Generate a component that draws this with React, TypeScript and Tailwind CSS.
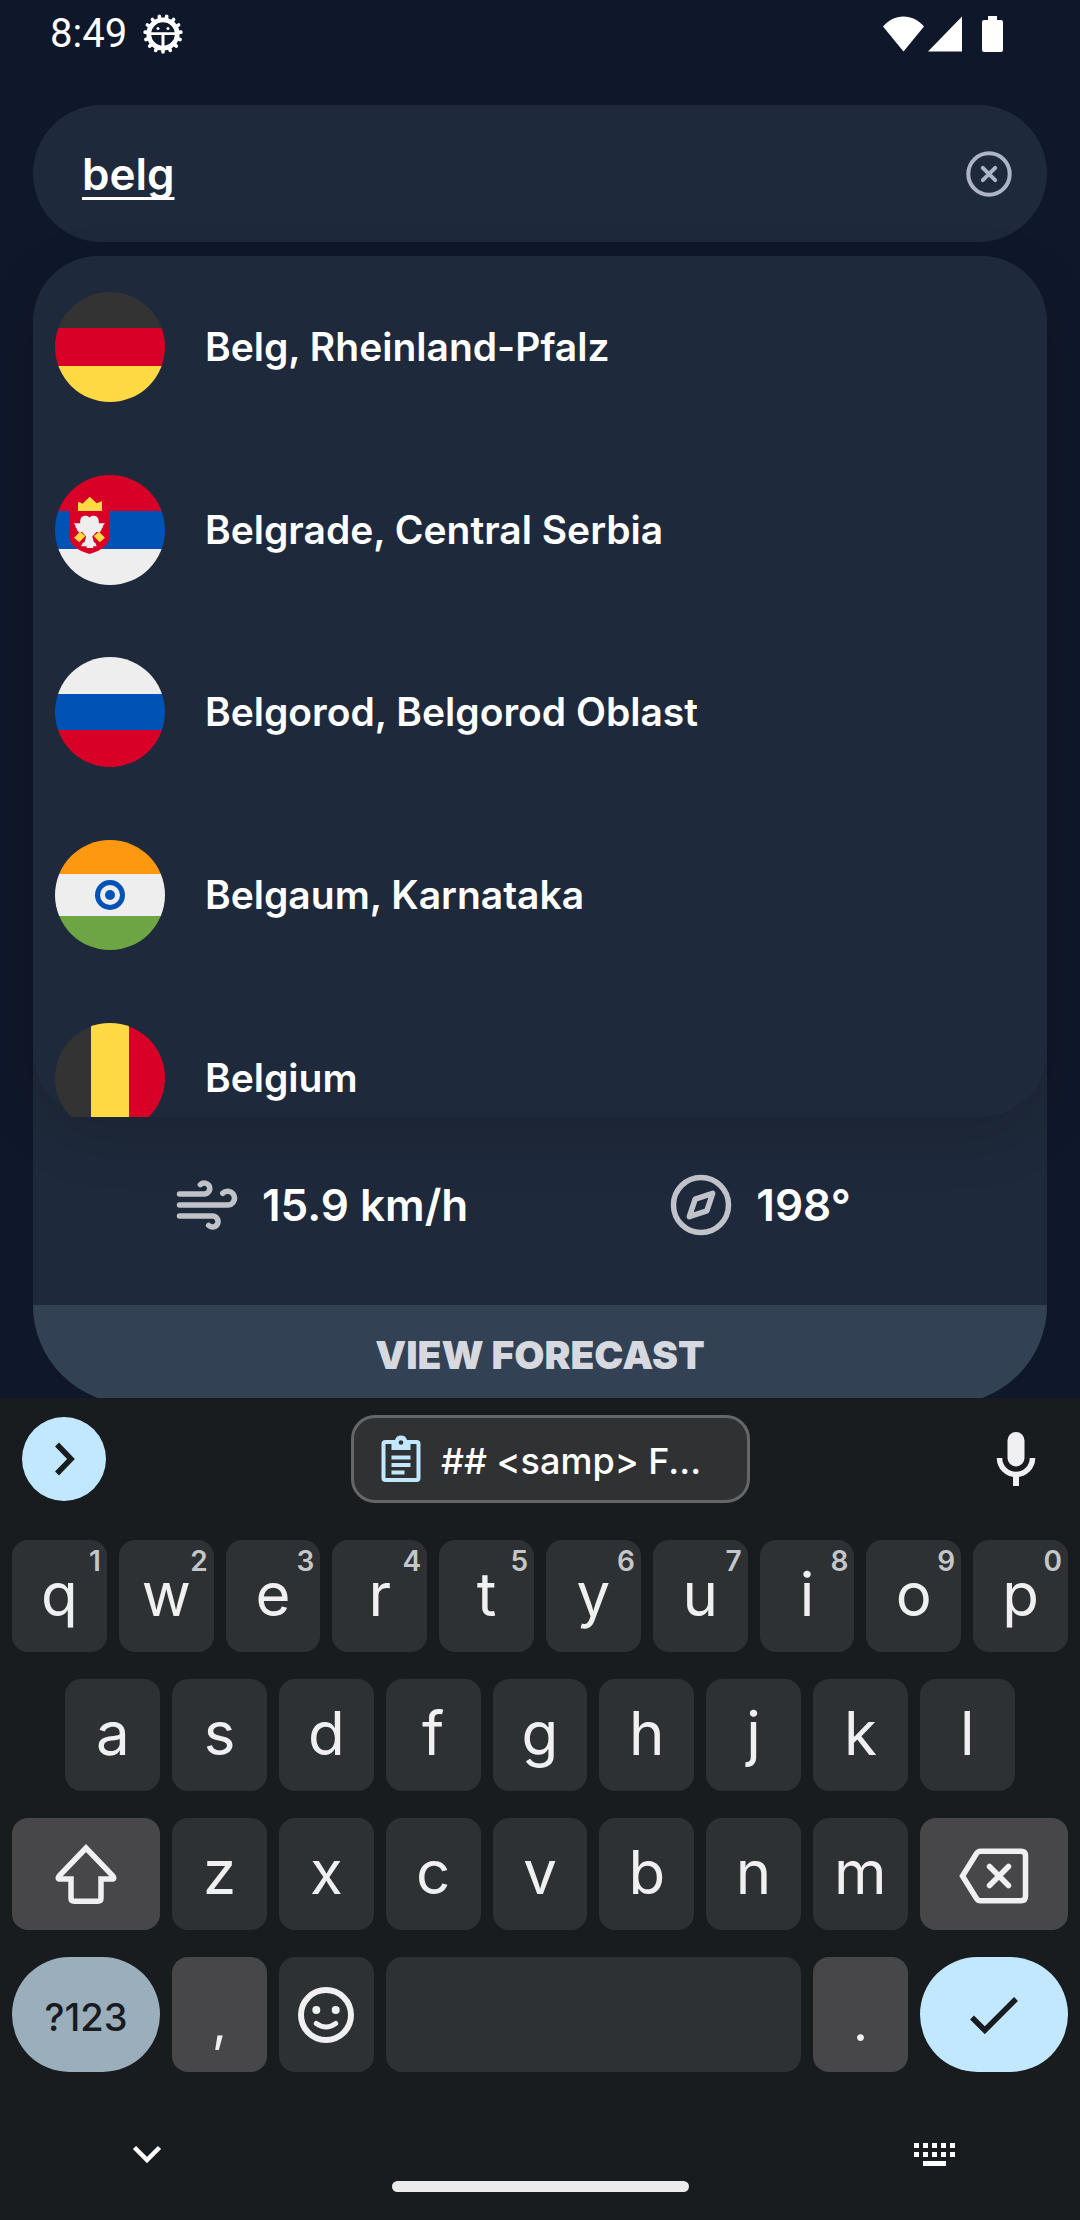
import React from "react";

type Flag = "de" | "rs" | "ru" | "in" | "be";

const results: { flag: Flag; name: string }[] = [
  { flag: "de", name: "Belg, Rheinland-Pfalz" },
  { flag: "rs", name: "Belgrade, Central Serbia" },
  { flag: "ru", name: "Belgorod, Belgorod Oblast" },
  { flag: "in", name: "Belgaum, Karnataka" },
  { flag: "be", name: "Belgium" },
];

const numberedKeys = [
  ["q", "1"],
  ["w", "2"],
  ["e", "3"],
  ["r", "4"],
  ["t", "5"],
  ["y", "6"],
  ["u", "7"],
  ["i", "8"],
  ["o", "9"],
  ["p", "0"],
];
const homeKeys = ["a", "s", "d", "f", "g", "h", "j", "k", "l"];
const bottomKeys = ["z", "x", "c", "v", "b", "n", "m"];

function DebugIcon() {
  const teeth = Array.from({ length: 15 }, (_, i) => i * 24);
  return (
    <svg viewBox="0 0 40 40" className="size-10" aria-hidden="true">
      <g stroke="#fff" strokeLinecap="round" fill="none">
        {teeth.map((a) => (
          <path key={a} d="M20 34v4" strokeWidth="3.6" transform={`rotate(${a} 20 20)`} />
        ))}
        <circle cx="20" cy="20" r="14.2" strokeWidth="4.800" />
        <path d="M8 19.6h24" strokeWidth="2.8" />
        <path d="M20 20v13" strokeWidth="3" />
      </g>
      <circle cx="15" cy="14.4" r="1.5" fill="#fff" />
      <circle cx="25" cy="14.4" r="1.5" fill="#fff" />
    </svg>
  );
}

function StatusBar() {
  return (
    <header className="flex h-[68px] shrink-0 items-center justify-between pl-[50px] pr-[77px]">
      <div className="flex items-center gap-4">
        <span className="font-['Roboto',sans-serif] text-[40px] leading-[48px]">8:49</span>
        <DebugIcon />
      </div>
      <div className="flex items-center">
        <svg viewBox="0 0 41 36" className="mr-1 h-9 w-[41px]" aria-hidden="true">
          <path d="M0 10.5C5.600 4 12.600.5 20.500.5S35.400 4 41 10.500L20.500 35.500Z" fill="#fff" />
        </svg>
        <svg viewBox="0 0 34 36" className="mr-5 h-9 w-[34px]" aria-hidden="true">
          <path d="M34 .5V35.500H0Z" fill="#fff" />
        </svg>
        <svg viewBox="0 0 21 36" className="h-9 w-[21px]" aria-hidden="true">
          <path d="M6 0h9v4h4a2 2 0 0 1 2 2v28a2 2 0 0 1-2 2H2a2 2 0 0 1-2-2V6a2 2 0 0 1 2-2h4Z" fill="#fff" />
        </svg>
      </div>
    </header>
  );
}

function FlagIcon({ flag }: { flag: Flag }) {
  return (
    <svg viewBox="0 0 110 110" className="size-[110px] shrink-0 rounded-full" aria-hidden="true">
      {flag === "de" && (
        <>
          <path fill="#333" d="M0 0h110v36H0z" />
          <path fill="#d80027" d="M0 36h110v38H0z" />
          <path fill="#ffda44" d="M0 74h110v36H0z" />
        </>
      )}
      {flag === "rs" && (
        <>
          <path fill="#d80027" d="M0 0h110v36H0z" />
          <path fill="#0052b4" d="M0 36h110v38H0z" />
          <path fill="#eee" d="M0 74h110v36H0z" />
          <path fill="#d80027" d="M14.300 35h40.400v25c0 10-8 15.500-20.200 19C22.300 75.500 14.300 70 14.300 60Z" />
          <path fill="#ffda44" d="M23 36v-8.700h2l2.500 1.400 7.200-7 7 6.600 3.300-1.300 2-1v10Z" />
          <path fill="#ffda44" d="m19 62.700 6-6 5.300 4.300-6 6.300ZM50 62.700l-6-6-5.300 4.300 6 6.300Z" />
          <path
            fill="#eee"
            d="M34.500 42.500c1.500-2 5-2.200 7-1 1.500 1 2.500 3 2.300 6.800h6.200l-2.600 3.200h1l-2.300 3h.8l-2.300 2.800-3.300-.3-4 4.500 1.700 6h1.200l1.500 3.700h-3.500V73h-6.600v-1.800H26l2-3.700h1.500l1.600-6-4-4.500-3.300.3-2.200-2.800h.8l-2.400-3h1L18.900 48.300H25.200c-.2-3.800.7-5.800 2.200-6.800 2-1.200 5.600-1 7.100 1Z"
          />
        </>
      )}
      {flag === "ru" && (
        <>
          <path fill="#eee" d="M0 0h110v37H0z" />
          <path fill="#0052b4" d="M0 37h110v36H0z" />
          <path fill="#d80027" d="M0 73h110v37H0z" />
        </>
      )}
      {flag === "in" && (
        <>
          <path fill="#ff9811" d="M0 0h110v34H0z" />
          <path fill="#eee" d="M0 34h110v42H0z" />
          <path fill="#6da544" d="M0 76h110v34H0z" />
          <circle cx="55" cy="55" r="15" fill="#0052b4" />
          <circle cx="55" cy="55" r="10" fill="#eee" />
          <circle cx="55" cy="55" r="5" fill="#0052b4" />
        </>
      )}
      {flag === "be" && (
        <>
          <path fill="#333" d="M0 0h36v110H0z" />
          <path fill="#ffda44" d="M36 0h38v110H36z" />
          <path fill="#d80027" d="M74 0h36v110H74z" />
        </>
      )}
    </svg>
  );
}

function SearchBar() {
  return (
    <div className="mx-[33px] mt-[37px] flex h-[137px] shrink-0 items-center rounded-full bg-[#1e293b] pl-[49px] pr-[34px]">
      <input
        type="text"
        aria-label="Search city"
        defaultValue="belg"
        className="min-w-0 flex-1 bg-transparent text-[44px] font-semibold leading-[54px] text-white underline decoration-[3px] underline-offset-[7px] outline-none [text-decoration-skip-ink:none]"
      />
      <button type="button" aria-label="Clear search">
        <svg viewBox="0 0 48 48" className="size-12" fill="none" stroke="#aeb4c8" strokeWidth="4" strokeLinecap="round" aria-hidden="true">
          <circle cx="24" cy="24" r="20.700" />
          <path d="m17.800 17.800 12.400 12.400M30.200 17.800 17.800 30.200" />
        </svg>
      </button>
    </div>
  );
}

function WeatherCard() {
  return (
    <main className="mx-[33px] mt-[14px] shrink-0 rounded-[99px] rounded-t-[66px] bg-[#1e293b]">
      <div className="relative rounded-[66px] bg-[#1e293b] shadow-[0_20px_60px_rgba(0,0,0,0.12)]">
        <div className="h-[861px] overflow-hidden">
          <ul className="flex h-[913px] flex-col">
            {results.map((r) => (
              <li key={r.name} className="flex flex-1">
                <button type="button" className="flex flex-1 items-center gap-10 pl-[22px] text-left">
                  <FlagIcon flag={r.flag} />
                  <span className="text-[39px] font-semibold leading-[48px]">{r.name}</span>
                </button>
              </li>
            ))}
          </ul>
        </div>
      </div>
      <div className="flex h-[188px] items-center gap-[200px] pb-[12px] pl-[141px]">
        <div className="flex items-center gap-[22px]">
          <svg viewBox="0 0 24 24" className="size-[66px]" fill="none" stroke="#c0c3c9" strokeWidth="2" strokeLinecap="round" strokeLinejoin="round" aria-hidden="true">
            <path d="M9.590 4.590A2 2 0 1 1 11 8H2m10.590 11.410A2 2 0 1 0 14 16H2m15.730-8.270A2.500 2.500 0 1 1 19.500 12H2" />
          </svg>
          <span className="text-[44px] font-semibold leading-[54px]">15.9 km/h</span>
        </div>
        <div className="flex items-center gap-[22px]">
          <svg viewBox="0 0 24 24" className="size-[66px]" fill="none" stroke="#c0c3c9" strokeWidth="2" strokeLinecap="round" strokeLinejoin="round" aria-hidden="true">
            <circle cx="12" cy="12" r="10" />
            <path d="m16.240 7.760-2.120 6.360-6.360 2.120 2.120-6.360Z" />
          </svg>
          <span className="text-[44px] font-semibold leading-[54px]">198°</span>
        </div>
      </div>
      <button type="button" className="flex h-[99px] w-full items-center justify-center rounded-b-[99px] bg-[#334155] text-[39px] font-black leading-[48px] text-[#d6d9df]">
        VIEW FORECAST
      </button>
    </main>
  );
}

function LetterKey({ label, hint }: { label: string; hint?: string }) {
  return (
    <button
      type="button"
      className="relative col-span-2 flex items-center justify-center rounded-2xl bg-[#2d3134] pb-1 text-[60px] leading-[72px]"
    >
      {label}
      {hint && (
        <span className="absolute right-[6px] top-1 text-[28px] font-semibold leading-[34px] text-[#c5c6c8]">{hint}</span>
      )}
    </button>
  );
}

function Keyboard() {
  return (
    <section aria-label="Keyboard" className="shrink-0 bg-[#191c1f] pt-[17px] text-[#f0eff2]">
      <div className="flex h-[88px] items-center justify-between pl-[22px] pr-[43px]">
        <button type="button" aria-label="Open toolbar" className="flex size-[84px] items-center justify-center rounded-full bg-[#c2e8ff]">
          <svg viewBox="0 0 40 40" className="size-10" fill="none" stroke="#191c1f" strokeWidth="5.500" aria-hidden="true">
            <path d="m13 5.500 14 14.500-14 14.500" />
          </svg>
        </button>
        <button type="button" className="flex h-[88px] w-[399px] items-center gap-5 rounded-3xl border-[3px] border-[#646668] bg-[#303133] pl-[27px]">
          <svg viewBox="0 0 40 48" className="h-12 w-10 shrink-0" aria-hidden="true">
            <rect x="2.500" y="7" width="35" height="38" rx="2" fill="none" stroke="#c2e8ff" strokeWidth="4" />
            <path d="M10.500 5h3.500a6.300 6.300 0 0 1 12 0h3.500v10h-19Z" fill="#c2e8ff" />
            <circle cx="20" cy="7.500" r="2.300" fill="#303133" />
            <path d="M10.500 22.500h19M10.500 30h19M10.500 37.500h13" stroke="#c2e8ff" strokeWidth="4" />
          </svg>
          <span className="pt-1 text-[36px] font-medium leading-[44px] text-white">{"## <samp> F..."}</span>
        </button>
        <button type="button" aria-label="Voice input">
          <svg viewBox="0 0 42 54" className="h-[54px] w-[42px]" aria-hidden="true">
            <rect x="12.500" y="0" width="17" height="34.500" rx="8.500" fill="#f0eff2" />
            <path d="M4.500 26a16.500 16.500 0 0 0 33 0" fill="none" stroke="#f0eff2" strokeWidth="5.500" />
            <path d="M21 42v12" stroke="#f0eff2" strokeWidth="6" />
          </svg>
        </button>
      </div>

      <div className="mt-[37px] flex flex-col gap-[27px] px-3">
        <div className="grid h-[112px] grid-cols-20 gap-3">
          {numberedKeys.map(([label, hint]) => (
            <LetterKey key={label} label={label} hint={hint} />
          ))}
        </div>
        <div className="grid h-[112px] grid-cols-20 gap-3">
          <span aria-hidden="true" />
          {homeKeys.map((label) => (
            <LetterKey key={label} label={label} />
          ))}
        </div>
        <div className="grid h-[112px] grid-cols-20 gap-3">
          <button type="button" aria-label="Shift" className="col-span-3 flex items-center justify-center rounded-2xl bg-[#474749]">
            <svg viewBox="0 0 62 60" className="h-[60px] w-[62px]" fill="none" stroke="#f0eff2" strokeWidth="5.500" aria-hidden="true">
              <path d="M31 4 4.500 31.500Q1.500 35 5.500 35H16V54q0 3.200 3.200 3.200h23.600Q46 57.200 46 54V35H56.500q4 0 1-3.500Z" />
            </svg>
          </button>
          {bottomKeys.map((label) => (
            <LetterKey key={label} label={label} />
          ))}
          <button type="button" aria-label="Backspace" className="col-span-3 flex items-center justify-center rounded-2xl bg-[#474749] pt-1">
            <svg viewBox="0 0 70 56" className="h-14 w-[70px]" fill="none" stroke="#f0eff2" strokeWidth="5.500" aria-hidden="true">
              <path d="M3.500 28 17.500 5.500Q19 3.200 21.500 3.200H62q4.500 0 4.500 4.500v40.600q0 4.500-4.500 4.500H21.500q-2.500 0-4-2.300Z" />
              <path d="m30.500 18.500 19 19M49.500 18.500l-19 19" strokeLinecap="round" />
            </svg>
          </button>
        </div>
        <div className="grid h-[115px] grid-cols-20 gap-3">
          <button type="button" className="col-span-3 flex items-center justify-center rounded-full bg-[#9baebc] pt-1 text-[38px] font-medium leading-[48px] text-[#191c1f]">
            ?123
          </button>
          <button type="button" className="col-span-2 flex items-center justify-center rounded-2xl bg-[#474749] pt-4 text-[52px] leading-[62px]">
            ,
          </button>
          <button type="button" aria-label="Emoji" className="col-span-2 flex items-center justify-center rounded-2xl bg-[#2d3134]">
            <svg viewBox="0 0 56 56" className="size-14" fill="none" stroke="#f0eff2" aria-hidden="true">
              <circle cx="28" cy="28" r="25" strokeWidth="6" />
              <circle cx="18.300" cy="23" r="4" fill="#f0eff2" stroke="none" />
              <circle cx="37.700" cy="23" r="4" fill="#f0eff2" stroke="none" />
              <path d="M18.300 36.500q9.700 7 19.400 0" strokeWidth="5" strokeLinecap="round" />
            </svg>
          </button>
          <button type="button" aria-label="Space" className="col-span-8 rounded-2xl bg-[#2d3134]" />
          <button type="button" className="col-span-2 flex items-center justify-center rounded-2xl bg-[#474749] pt-4 text-[52px] leading-[62px]">
            .
          </button>
          <button type="button" aria-label="Done" className="col-span-3 flex items-center justify-center rounded-full bg-[#c2e8ff]">
            <svg viewBox="0 0 48 38" className="h-[38px] w-12" fill="none" stroke="#191c1f" strokeWidth="5.500" aria-hidden="true">
              <path d="m2 21.500 12.800 12.800L46 3" />
            </svg>
          </button>
        </div>
      </div>

      <nav aria-label="System navigation" className="mt-[70px] pb-[28px]">
        <div className="flex h-6 items-center justify-between pl-[132px] pr-[124px]">
          <button type="button" aria-label="Hide keyboard">
            <svg viewBox="0 0 30 18" className="h-[18px] w-[30px]" fill="none" stroke="#fff" strokeWidth="4.500" aria-hidden="true">
              <path d="m2.500 2.500 12.500 12.500 12.500-12.500" />
            </svg>
          </button>
          <button type="button" aria-label="Switch keyboard">
            <svg viewBox="0 0 42 24" className="h-6 w-[42px]" fill="#fff" aria-hidden="true">
              {[0, 9, 18, 27, 36].map((x) => (
                <React.Fragment key={x}>
                  <rect x={x} y="1" width="5" height="5" />
                  <rect x={x} y="10" width="5" height="5" />
                </React.Fragment>
              ))}
              <rect x="9" y="19" width="23" height="5" />
            </svg>
          </button>
        </div>
        <div className="mx-auto mt-[15px] h-[11px] w-[297px] rounded-full bg-[#ececec]" />
      </nav>
    </section>
  );
}

export default function App() {
  return (
    <div className="flex h-screen flex-col bg-[#0f172a] font-['Inter',sans-serif] text-white">
      <div className="flex min-h-0 flex-1 flex-col overflow-hidden">
        <StatusBar />
        <SearchBar />
        <WeatherCard />
      </div>
      <Keyboard />
    </div>
  );
}
